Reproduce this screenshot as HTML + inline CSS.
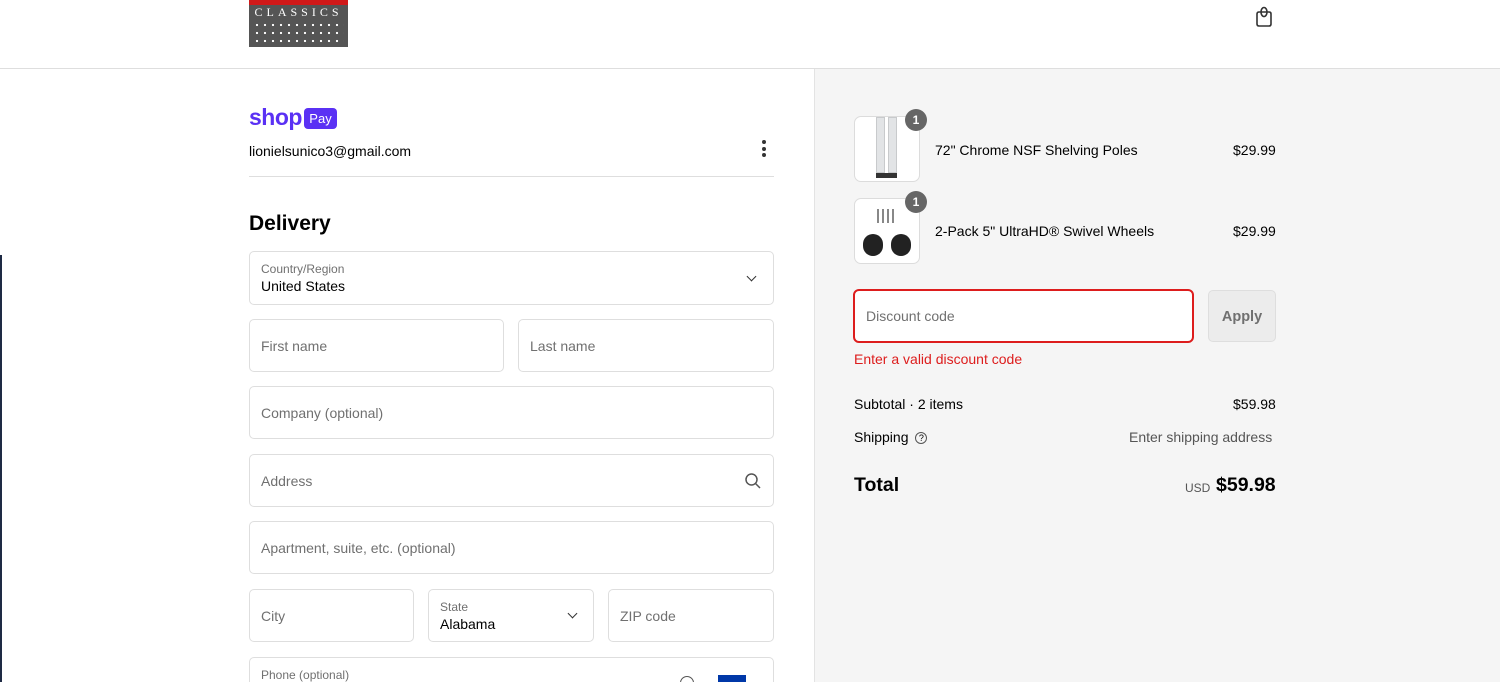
<!DOCTYPE html>
<html style="overflow:hidden;height:682px"><head><meta charset="utf-8"><style>
*{box-sizing:border-box;margin:0;padding:0}
body{width:1500px;height:682px;overflow:hidden;font-family:"Liberation Sans",Arial,sans-serif;color:#000;background:#fff;position:relative}
.hdr{position:absolute;left:0;top:0;width:1500px;height:69px;border-bottom:1px solid #dedede;background:#fff}
.right{position:absolute;left:814px;top:69px;width:686px;height:613px;background:#f5f5f5;border-left:1px solid #e3e3e3}
.f{position:absolute;border:1px solid #dedede;border-radius:5px;background:#fff;font-size:14px;color:#707070;padding-left:11px;display:flex;align-items:center}
.lab{font-size:12px;color:#707070;position:absolute;left:11px;top:10px}
.val{font-size:14px;color:#000;position:absolute;left:11px;top:26px}
.chev{position:absolute;width:7px;height:7px;border-right:1.5px solid #333;border-bottom:1.5px solid #333;transform:rotate(45deg)}
.t{position:absolute;font-size:14px;color:#000}
.thumb{position:absolute;width:66px;height:66px;border:1px solid #dcdcdc;border-radius:7px;background:#fff}
.badge{position:absolute;width:22px;height:22px;border-radius:11px;background:#666;color:#fff;font-size:12px;font-weight:bold;text-align:center;line-height:22px}
</style></head><body>
<div class="hdr"></div>
<div style="position:absolute;left:0;top:255px;width:2px;height:427px;background:#1e2a44"></div>
<div style="position:absolute;left:249px;top:0;width:99px;height:47px;background:#555;overflow:hidden">
<div style="height:5px;background:#d01919"></div>
<div style="color:#fff;font-family:'Liberation Serif',serif;font-size:12px;letter-spacing:4px;text-align:center;line-height:14px">CLASSICS</div>
<div style="margin:2px 4px;height:24px;background-image:radial-gradient(circle,#fff 1px,transparent 1.3px);background-size:8px 8px"></div>
</div>
<svg style="position:absolute;left:1253px;top:5px" width="22" height="22" viewBox="0 0 22 22"><path d="M4 9 Q4 7 6 7 H16 Q18 7 18 9 L18 19 Q18 21 16 21 H6 Q4 21 4 19Z" fill="none" stroke="#333" stroke-width="1.6"/><ellipse cx="11" cy="7" rx="3" ry="4.5" fill="none" stroke="#333" stroke-width="1.6"/></svg>
<div class="right"></div>
<div style="position:absolute;left:249px;top:104px;font-size:23px;font-weight:bold;color:#5a31f4;letter-spacing:-0.5px">shop</div>
<div style="position:absolute;left:304px;top:108px;width:33px;height:21px;background:#5a31f4;border-radius:4px;color:#fff;font-size:13px;text-align:center;line-height:21px">Pay</div>
<div class="t" style="left:249px;top:143px">lionielsunico3@gmail.com</div>
<div style="position:absolute;left:762px;top:140px;width:4px"><div style="width:4px;height:4px;border-radius:2px;background:#333;margin-bottom:2.5px"></div><div style="width:4px;height:4px;border-radius:2px;background:#333;margin-bottom:2.5px"></div><div style="width:4px;height:4px;border-radius:2px;background:#333"></div></div>
<div style="position:absolute;left:249px;top:176px;width:525px;height:1px;background:#dedede"></div>
<div style="position:absolute;left:249px;top:212px;font-size:21px;font-weight:bold">Delivery</div>
<div class="f" style="left:249px;top:251px;width:525px;height:54px"><span class="lab">Country/Region</span><span class="val">United States</span><span class="chev" style="left:498px;top:21px"></span></div>
<div class="f" style="left:249px;top:319px;width:255px;height:53px">First name</div>
<div class="f" style="left:518px;top:319px;width:256px;height:53px">Last name</div>
<div class="f" style="left:249px;top:386px;width:525px;height:53px">Company (optional)</div>
<div class="f" style="left:249px;top:454px;width:525px;height:53px">Address
<svg style="position:absolute;left:494px;top:17px" width="18" height="18" viewBox="0 0 18 18"><circle cx="7.5" cy="7.5" r="5.5" fill="none" stroke="#555" stroke-width="1.5"/><path d="M11.5 11.5L16 16" stroke="#555" stroke-width="1.5"/></svg></div>
<div class="f" style="left:249px;top:521px;width:525px;height:53px">Apartment, suite, etc. (optional)</div>
<div class="f" style="left:249px;top:589px;width:165px;height:53px">City</div>
<div class="f" style="left:428px;top:589px;width:166px;height:53px"><span class="lab">State</span><span class="val">Alabama</span><span class="chev" style="left:140px;top:20px"></span></div>
<div class="f" style="left:608px;top:589px;width:166px;height:53px">ZIP code</div>
<div class="f" style="left:249px;top:657px;width:525px;height:53px"><span class="lab">Phone (optional)</span>
<div style="position:absolute;left:430px;top:18px;width:14px;height:14px;border:1.5px solid #555;border-radius:7px"></div>
<div style="position:absolute;left:468px;top:17px;width:28px;height:10px;background:#0038a8"></div></div>
<div class="thumb" style="left:854px;top:116px"><div style="position:absolute;left:21px;top:0;width:9px;height:56px;background:#e2e4e6;border:1px solid #c8cacc"></div><div style="position:absolute;left:33px;top:0;width:9px;height:56px;background:#e2e4e6;border:1px solid #c8cacc"></div><div style="position:absolute;left:21px;top:56px;width:21px;height:5px;background:#333"></div></div>
<div class="badge" style="left:905px;top:109px">1</div>
<div class="t" style="left:935px;top:142px">72" Chrome NSF Shelving Poles</div>
<div class="t" style="left:1233px;top:142px">$29.99</div>
<div class="thumb" style="left:854px;top:198px"><div style="position:absolute;left:22px;top:10px;width:20px;height:14px;background:repeating-linear-gradient(90deg,#888 0 2px,transparent 2px 5px)"></div><div style="position:absolute;left:8px;top:35px;width:20px;height:22px;border-radius:10px;background:#222"></div><div style="position:absolute;left:36px;top:35px;width:20px;height:22px;border-radius:10px;background:#222"></div></div>
<div class="badge" style="left:905px;top:191px">1</div>
<div class="t" style="left:935px;top:223px">2-Pack 5" UltraHD® Swivel Wheels</div>
<div class="t" style="left:1233px;top:223px">$29.99</div>
<div class="f" style="left:853px;top:289px;width:341px;height:54px;border:2px solid #dd1d1d;border-radius:6px">Discount code</div>
<div style="position:absolute;left:1208px;top:290px;width:68px;height:52px;border:1px solid #dedede;border-radius:5px;background:#ececec;color:#707070;font-size:14.5px;font-weight:bold;text-align:center;line-height:52px">Apply</div>
<div class="t" style="left:854px;top:351px;color:#dd1d1d">Enter a valid discount code</div>
<div class="t" style="left:854px;top:396px">Subtotal · 2 items</div>
<div class="t" style="left:1233px;top:396px">$59.98</div>
<div class="t" style="left:854px;top:429px">Shipping <span style="display:inline-block;width:12px;height:12px;border:1.3px solid #555;border-radius:6px;font-size:9px;text-align:center;line-height:10px;vertical-align:1px;margin-left:3px">?</span></div>
<div class="t" style="left:1129px;top:429px;color:#555">Enter shipping address</div>
<div class="t" style="left:854px;top:474px;font-size:19.5px;font-weight:bold">Total</div>
<div class="t" style="left:1185px;top:481px;font-size:12px;color:#555">USD</div>
<div class="t" style="left:1216px;top:474px;font-size:19.5px;font-weight:bold">$59.98</div>
</body></html>
